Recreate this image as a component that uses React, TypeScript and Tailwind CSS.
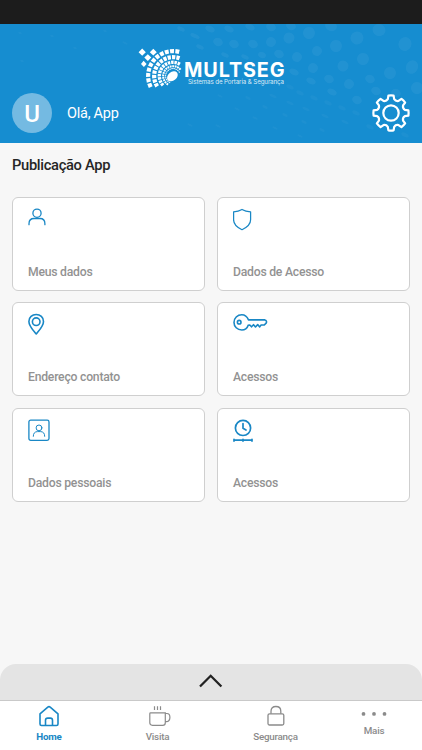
import React from "react";

const dots: number[][] = [
  [309, 33, 6, 6], [289, 38, 5.5, 5.5], [357, 38, 6.5, 6.5], [379, 30, 6.5, 6], [405, 44, 6.5, 7],
  [336, 46, 6, 6], [363, 59, 6, 6], [343, 66, 5.5, 5.5], [317, 51, 5, 5], [412, 67, 6, 7],
  [390, 73, 6, 6], [349, 84, 5, 5], [370, 79, 5, 4], [376, 91, 5, 4], [417, 88, 6, 6], [396, 93, 5, 4],
  [271, 42, 5, 5], [253, 44, 5, 4], [234, 44, 5, 4], [218, 42, 5, 4], [250, 27, 5, 3], [271, 27, 5, 4],
  [291, 26, 5, 4], [331, 26, 6, 5], [297, 57, 5, 5], [313, 68, 5, 5], [279, 54, 5, 4], [329, 79, 5, 4],
  [294, 72, 5, 3], [311, 81, 5, 3], [332, 92, 5, 3], [357, 100, 5, 4], [229, 29, 5, 3], [210, 29, 5, 3],
  [195, 36, 5, 2], [181, 29, 4, 2], [200, 47, 4, 2], [262, 55, 4, 3], [245, 57, 4, 2], [225, 55, 4, 2],
];

const faintDots: number[][] = [
  [300, 93, 4, 2], [314, 98, 4, 2], [328, 103, 4, 2], [342, 108, 4, 2], [356, 113, 4, 2], [290, 87, 4, 2],
  [273, 96, 4, 1.5], [290, 103, 4, 1.5], [306, 109, 4, 1.5], [325, 116, 4, 1.5], [345, 122, 4, 1.5],
  [248, 98, 3, 1.5], [265, 107, 3, 1.5], [285, 115, 3, 1.5], [304, 122, 3, 1.5], [322, 130, 3, 1.5],
  [220, 96, 3, 1], [237, 109, 3, 1], [255, 118, 3, 1], [275, 128, 3, 1], [300, 136, 3, 1],
  [190, 125, 3, 1], [218, 126, 3, 1], [20, 33, 2, 1], [52, 36, 2, 1], [75, 48, 2, 1], [105, 31, 2, 1],
  [125, 43, 3, 1], [22, 61, 2, 1], [370, 127, 4, 2], [405, 135, 4, 2],
];

function HeaderDots() {
  return (
    <svg className="absolute inset-0" width="422" height="119" viewBox="0 24 422 119" fill="#fff">
      <g fillOpacity="0.05">
        {dots.map(([x, y, rx, ry], i) => (
          <ellipse key={i} cx={x} cy={y} rx={rx} ry={ry} transform={`rotate(25 ${x} ${y})`} />
        ))}
      </g>
      <g fillOpacity="0.03">
        {faintDots.map(([x, y, rx, ry], i) => (
          <ellipse key={i} cx={x} cy={y} rx={rx} ry={ry} transform={`rotate(25 ${x} ${y})`} />
        ))}
      </g>
    </svg>
  );
}

/* Rings of the logo: inner radius, outer radius, start angle, end angle, cell count. */
const rings = [
  [22.8, 27, 152, 286, 11],
  [16.8, 21, 145, 292, 11],
  [12, 15.4, 135, 302, 12],
  [8.8, 10.9, 118, 322, 14],
  [6.9, 7.9, 110, 335, 14],
];

const ringCells = rings.flatMap(([r0, r1, from, to, n]) => {
  const step = (to - from) / n;
  return Array.from({ length: n }, (_, i) => {
    const a0 = from + step * i + step * 0.13;
    const a1 = from + step * (i + 1) - step * 0.13;
    const point = (r: number, a: number) => {
      const t = (a * Math.PI) / 180;
      return `${(173 + r * Math.cos(t)).toFixed(2)} ${(76 + r * Math.sin(t)).toFixed(2)}`;
    };
    return `M${point(r0, a0)}L${point(r1, a0)}L${point(r1, a1)}L${point(r0, a1)}Z`;
  });
});

function LogoMark() {
  return (
    <svg width="46" height="42" viewBox="137 47 46 42" fill="#fff">
      <path d={ringCells.join("")} />
      <ellipse cx="172.4" cy="76.3" rx="6" ry="4.3" transform="rotate(-40 172.4 76.3)" />
      <path d="m142.2 48.6 3.6 3.6-3.6 3.6-3.6-3.6zM153.3 48.8l3.5 3.4-3.5 3.4-3.5-3.4zM147.8 54.2l3.5 3.4-3.5 3.4-3.5-3.4zM143.6 60.8l3 3.2-2.7 3-2.9-3z" />
    </svg>
  );
}

const gearPath = (() => {
  const pts: string[] = [];
  for (let i = 0; i < 8; i++) {
    for (const [r, offset] of [[14.2, -13], [17.6, -8.5], [17.6, 8.5], [14.2, 13]]) {
      const a = ((i * 45 + offset) * Math.PI) / 180;
      pts.push(`${(20 + r * Math.sin(a)).toFixed(2)} ${(20 - r * Math.cos(a)).toFixed(2)}`);
    }
  }
  let d = "";
  for (let i = 0; i < 8; i++) {
    const k = i * 4;
    d += `${i === 0 ? "M" : "L"}${pts[k]}L${pts[k + 1]}A17.6 17.6 0 0 1 ${pts[k + 2]}L${pts[k + 3]}`;
    const a = ((i * 45 + 22.5) * Math.PI) / 180;
    d += `Q${(20 + 12.4 * Math.sin(a)).toFixed(2)} ${(20 - 12.4 * Math.cos(a)).toFixed(2)} ${pts[(k + 4) % 32]}`;
  }
  return d + "Z";
})();

function Gear() {
  return (
    <svg width="40" height="40" viewBox="0 0 40 40" fill="none" stroke="#fff" strokeWidth="2.2" strokeLinejoin="round">
      <path d={gearPath} />
      <circle cx="20" cy="20" r="7.7" />
    </svg>
  );
}

/* Every card icon starts at the card's content edge and shares a 40x26 box. */
function Icon({ children, w = 1.2 }: { children: React.ReactNode; w?: number }) {
  return (
    <svg className="block" width="40" height="26" viewBox="0 0 40 26" fill="none" stroke="#1987c5" strokeWidth={w} strokeLinecap="round" strokeLinejoin="round">
      {children}
    </svg>
  );
}

const cards = [
  {
    label: "Meus dados",
    icon: <Icon w={1.3}><circle cx="9" cy="5.2" r="4.1" /><path d="M1 16.7v-.9Q1 10.5 6 10.5h6q4.9 0 4.9 5.3v.9" /></Icon>,
  },
  {
    label: "Dados de Acesso",
    icon: <Icon w={1.25}><path d="M9 1.5Q5.5 3.5.6 3.8v8C.6 17 4.8 19.8 9 21.7c4.2-1.9 8.6-4.7 8.6-9.9v-8Q12.5 3.5 9 1.5Z" /></Icon>,
  },
  {
    label: "Endereço contato",
    icon: <Icon w={1.6}><path d="M8.2 21C5 17 .9 13 .9 8.4C.9 4.1 4.2 1.5 8.2 1.5S15.5 4.1 15.5 8.4C15.5 13 11.4 17 8.2 21Z" /><circle cx="8.2" cy="8.7" r="3.8" /></Icon>,
  },
  {
    label: "Acessos",
    icon: <Icon w={1.6}><path d="M15.5 6.9C14 3.3 11.6 1.8 8.8 1.8C4.3 1.8 1 5.2 1 9.4s3.3 7.6 7.8 7.6c3.1 0 5.3-1.6 6.3-4.6l1.7-.4 1.7 1.8 2-2.1 2 2.3 2.2-2.4 2 2.3 1.4-1.9h3.2l2-2.1q.8-2.3-1.5-3Z" /><circle cx="6.2" cy="9.2" r="1.8" /></Icon>,
  },
  {
    label: "Dados pessoais",
    icon: <Icon w={1.3}><rect x=".9" y="1.2" width="20.1" height="20.2" rx="1.8" /><g strokeWidth="1"><circle cx="11" cy="8.9" r="2.9" /><path d="M5.3 17.3q0-4.7 4.3-4.7h2.8q4.3 0 4.3 4.7" /></g></Icon>,
  },
  {
    label: "Acessos",
    icon: <Icon w={1.7}><circle cx="10" cy="8.9" r="7.6" /><path d="M10 4.5v4.8l3 1.7" /><path d="M1 21.2h18M1 20.3v1.8M10 20.3v1.8M19 20.3v1.8" /></Icon>,
  },
];

export default function App() {
  return (
    <div className="flex h-[750px] w-[422px] flex-col overflow-hidden bg-[#f7f7f7] font-['Roboto',sans-serif]">
      <div className="h-6 shrink-0 bg-[#1c1c1c]" />
      <header className="relative h-[119px] shrink-0 bg-[#168dd0] text-white">
        <HeaderDots />
        <div className="relative flex h-[69px] pl-[137px] pt-[23px]">
          <LogoMark />
          <svg className="mt-[13px] overflow-visible" width="103" height="30" viewBox="183 60 103 30" fill="#fff" fontFamily="Inter, sans-serif">
            <text x="184" y="77" fontSize="19.8" fontWeight="700" textLength="100.5">MULTSEG</text>
            <text x="188" y="84.3" fontSize="6.2" fillOpacity=".85" textLength="96">Sistemas de Portaria &amp; Segurança</text>
          </svg>
        </div>
        <div className="relative flex h-10 items-center pl-3 pr-[11px]">
          <div className="flex size-10 items-center justify-center rounded-full bg-[#74bae2] pt-0.5 text-2xl font-medium">U</div>
          <span className="ml-[15px] flex-1 pt-0.5 text-[14.5px] tracking-[-0.25px]">Olá, App</span>
          <Gear />
        </div>
      </header>

      <main className="flex-1 px-3 pt-3">
        <h1 className="text-[14.7px] leading-5 font-medium tracking-[-0.32px] text-[#262626]">Publicação App</h1>
        <div className="mt-[22px] grid grid-cols-2 gap-x-3 gap-y-[11.4px]">
          {cards.map((card, i) => (
            <section key={i} className="flex h-[94px] flex-col justify-between rounded-[6px] border-[1.4px] border-[#cfcfcf] bg-white pt-[10px] pr-3 pb-[9px] pl-[15px]">
              {card.icon}
              <span className="text-[12.2px] leading-[18px] font-medium tracking-[-0.23px] text-[#929292]">{card.label}</span>
            </section>
          ))}
        </div>
      </main>

      <div className="flex h-9 shrink-0 justify-center rounded-t-[16px] bg-[#e4e4e4]">
        <svg width="24" height="36" viewBox="0 0 24 36" fill="none" stroke="#222" strokeWidth="2.3"><path d="m1 22.5 10.7-10.7 10.7 10.7" /></svg>
      </div>
      <nav className="flex h-[50px] shrink-0 border-t border-[#c9c9c9] bg-white text-[9.8px] leading-3 font-medium tracking-[-0.22px] text-[#8b8b8b]">
        <div className="flex w-[98px] flex-col items-center pt-1 text-[#1987c5]">
          <svg className="-ml-px" width="22" height="22" viewBox="0 0 22 22" fill="none" stroke="currentColor" strokeWidth="1.6" strokeLinejoin="round">
            <path d="M2 8.8 9.8 2.1q1.2-1 2.4 0L20 8.8V19q0 1.5-1.5 1.5h-15Q2 20.5 2 19Z" />
            <path d="M7.5 20.3v-5q0-2.2 2.2-2.2h2.6q2.2 0 2.2 2.2v5" />
          </svg>
          <span className="mt-1 font-bold">Home</span>
        </div>
        <div className="flex w-[119px] flex-col items-center pt-1">
          <svg className="ml-1" width="24" height="22" viewBox="0 0 24 22" fill="none" stroke="currentColor" strokeWidth="1.2">
            <path d="M2.6 7.9h14.7v9.8q0 2.6-2.6 2.6H4.4q-2.6 0-2.6-2.6V8.7q0-.8.8-.8ZM17.3 8.5h1.6q3 0 3 3.8t-3 4.4h-1.6M6.5 1.3v3.6M9.5 1.3v3.6M12.5 1.3v3.6" />
          </svg>
          <span className="mt-1">Visita</span>
        </div>
        <div className="flex w-[117px] flex-col items-center pt-1">
          <svg width="22" height="22" viewBox="0 0 22 22" fill="none" stroke="currentColor" strokeWidth="1.3">
            <rect x="3" y="8.8" width="15.8" height="11.2" rx="1.5" /><path d="M6 8.7V6.2q0-4.7 4.9-4.7t4.9 4.7v2.5" />
          </svg>
          <span className="mt-1">Segurança</span>
        </div>
        <div className="flex flex-1 flex-col items-center pt-2.5 pl-[1px] pr-[9px]">
          <svg width="26" height="8" viewBox="0 0 26 8" fill="currentColor"><circle cx="2.5" cy="2.9" r="1.9" /><circle cx="13" cy="2.9" r="1.9" /><circle cx="23.5" cy="2.9" r="1.9" /></svg>
          <span className="mt-1.5">Mais</span>
        </div>
      </nav>
    </div>
  );
}
